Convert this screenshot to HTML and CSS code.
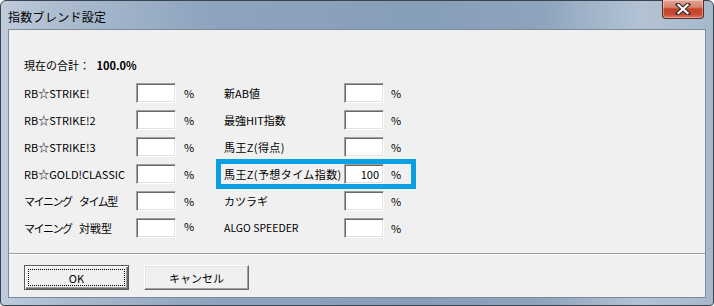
FILE: index.html
```html
<!DOCTYPE html>
<html lang="ja">
<head>
    <meta charset="UTF-8">
    <title>指数ブレンド設定</title>
    <link rel="stylesheet" href="styles.css">
</head>
<body>
    <div class="window">
        <div class="titlebar">
            <span class="title">指数ブレンド設定</span>
            <div class="close-btn">
                <svg width="20" height="12" viewBox="0 0 20 12">
                    <path d="M5 1.5 L15 10.5 M15 1.5 L5 10.5" stroke="#3a2a28" stroke-width="4.2" stroke-linecap="square"/>
                    <path d="M5.5 2 L14.5 10 M14.5 2 L5.5 10" stroke="#fff" stroke-width="2.2" stroke-linecap="square"/>
                </svg>
            </div>
        </div>
        <div class="client">
            <div class="content">
                <div class="summary">現在の合計： <b>100.0%</b></div>

                <div class="rows">
                    <div class="row">
                        <div class="field left"><span class="label">RB☆STRIKE!</span><input class="pct-input" type="text"><span class="pct">%</span></div>
                        <div class="field right"><span class="label">新AB値</span><input class="pct-input" type="text"><span class="pct">%</span></div>
                    </div>
                    <div class="row">
                        <div class="field left"><span class="label">RB☆STRIKE!2</span><input class="pct-input" type="text"><span class="pct">%</span></div>
                        <div class="field right"><span class="label">最強HIT指数</span><input class="pct-input" type="text"><span class="pct">%</span></div>
                    </div>
                    <div class="row">
                        <div class="field left"><span class="label">RB☆STRIKE!3</span><input class="pct-input" type="text"><span class="pct">%</span></div>
                        <div class="field right"><span class="label wide">馬王Z(得点)</span><input class="pct-input" type="text"><span class="pct">%</span></div>
                    </div>
                    <div class="row">
                        <div class="field left"><span class="label">RB☆GOLD!CLASSIC</span><input class="pct-input" type="text"><span class="pct">%</span></div>
                        <div class="field right highlight"><span class="label wide">馬王Z(予想タイム指数)</span><input class="pct-input" type="text" value="100"><span class="pct">%</span></div>
                    </div>
                    <div class="row">
                        <div class="field left"><span class="label"><span class="kana">マイニング</span> <span class="kana">タイム</span>型</span><input class="pct-input" type="text"><span class="pct">%</span></div>
                        <div class="field right"><span class="label">カツラギ</span><input class="pct-input" type="text"><span class="pct">%</span></div>
                    </div>
                    <div class="row">
                        <div class="field left"><span class="label"><span class="kana">マイニング</span> 対戦型</span><input class="pct-input" type="text"><span class="pct pct-up">%</span></div>
                        <div class="field right"><span class="label label-small">ALGO SPEEDER</span><input class="pct-input" type="text"><span class="pct">%</span></div>
                    </div>
                </div>
            </div>

            <div class="separator"></div>

            <div class="buttons">
                <button class="btn btn-default" type="button"><span class="focus">OK</span></button>
                <button class="btn" type="button">キャンセル</button>
            </div>
        </div>
    </div>
</body>
</html>
```

FILE: styles.css
```css
body {
    margin: 0;
    padding: 0;
    width: 714px;
    height: 306px;
    overflow: hidden;
    background-color: #fff;
    font-family: "Noto Sans CJK JP", "Noto Sans", sans-serif;
}

.window {
    box-sizing: border-box;
    width: 714px;
    height: 306px;
    border: 1px solid #3a4350;
    border-radius: 6px 6px 4px 4px;
    padding: 0 7px 7px 7px;
    display: flex;
    flex-direction: column;
    background: linear-gradient(90deg, #bdcbdb 0, #a9bacd 70px, #8ea4be 210px, #879eb9 420px, #8ea4bd 540px, #b3c3d4 640px, #a6b8cc 714px);
}

.titlebar {
    height: 28px;
    position: relative;
    display: flex;
    align-items: center;
}

.title {
    font-size: 12px;
    color: #000;
    margin-top: 2px;
    letter-spacing: 0.3px;
}

/* red close button in the top right corner */
.close-btn {
    position: absolute;
    right: 2px;
    top: -1px;
    width: 42px;
    height: 19px;
    box-sizing: border-box;
    border: 1px solid #5b2a22;
    border-top: none;
    border-radius: 0 0 4px 4px;
    background: linear-gradient(180deg, #e5a595 0, #d7826f 40%, #c3432c 50%, #c84b34 80%, #dd7a60 100%);
    box-shadow: inset 0 0 0 1px rgba(255, 255, 255, 0.35);
    display: flex;
    align-items: center;
    justify-content: center;
}

.client {
    flex: 1;
    display: flex;
    flex-direction: column;
    background-color: #f0f0f0;
    border: 1px solid #7d8a9a;
    color: #000;
    font-size: 11px;
}

.content {
    padding: 27px 0 0 15px;
}

.summary {
    height: 16px;
    line-height: 16px;
    margin-bottom: 10px;
    font-size: 11px;
}

.summary b {
    margin-left: 4px;
    font-weight: bold;
}

.rows {
    display: flex;
    flex-direction: column;
    gap: 7px;
}

.row {
    display: flex;
    height: 20px;
}

.field {
    display: flex;
    align-items: center;
    height: 20px;
}

.field.left .label {
    width: 112px;
}

.field.left .pct {
    width: 37px;
    padding-left: 8px;
}

.field.right {
    padding-left: 3px;
}

.field.right .label {
    width: 120px;
}

.field.right .pct {
    width: 20px;
    padding-left: 7px;
}

.label {
    white-space: nowrap;
    line-height: 16px;
    word-spacing: 5px;
}

.label.wide {
    letter-spacing: 0.4px;
}

.kana {
    letter-spacing: -1.5px;
}

.label-small {
    font-size: 10.5px;
    word-spacing: 0;
}

.pct {
    line-height: 16px;
}

.pct-up {
    margin-top: -4px;
}

.highlight {
    outline: 5px solid #0aa0e2;
}

.pct-input {
    box-sizing: border-box;
    width: 40px;
    height: 20px;
    margin: 0;
    padding: 0 4px 0 2px;
    border: 1px solid;
    border-color: #a0a0a0 #fff #fff #a0a0a0;
    box-shadow: inset 1px 1px #696969, inset -1px -1px #e3e3e3;
    background-color: #fff;
    font-family: "Noto Sans CJK JP", sans-serif;
    font-size: 11px;
    text-align: right;
    color: #000;
    outline: none;
}

.separator {
    margin-top: 15px;
    border-top: 1px solid #a0a0a0;
    border-bottom: 1px solid #fff;
}

.buttons {
    display: flex;
    gap: 15px;
    padding: 10px 0 0 15px;
}

.btn {
    box-sizing: border-box;
    width: 105px;
    height: 25px;
    margin: 0;
    padding: 0;
    border: 1px solid;
    border-color: #fff #696969 #696969 #fff;
    box-shadow: inset -1px -1px #a0a0a0, inset 1px 1px #e3e3e3;
    background-color: #f0f0f0;
    font-family: "Noto Sans CJK JP", sans-serif;
    font-size: 11px;
    color: #000;
    display: flex;
    align-items: center;
    justify-content: center;
}

.btn-default {
    border: 1px solid #5a5a5a;
    box-shadow: inset 1px 1px #fff, inset -1px -1px #696969, inset -2px -2px #a0a0a0;
    padding: 3px;
}

.focus {
    flex: 1;
    align-self: stretch;
    border: 1px dotted #000;
    display: flex;
    align-items: center;
    justify-content: center;
}
```
